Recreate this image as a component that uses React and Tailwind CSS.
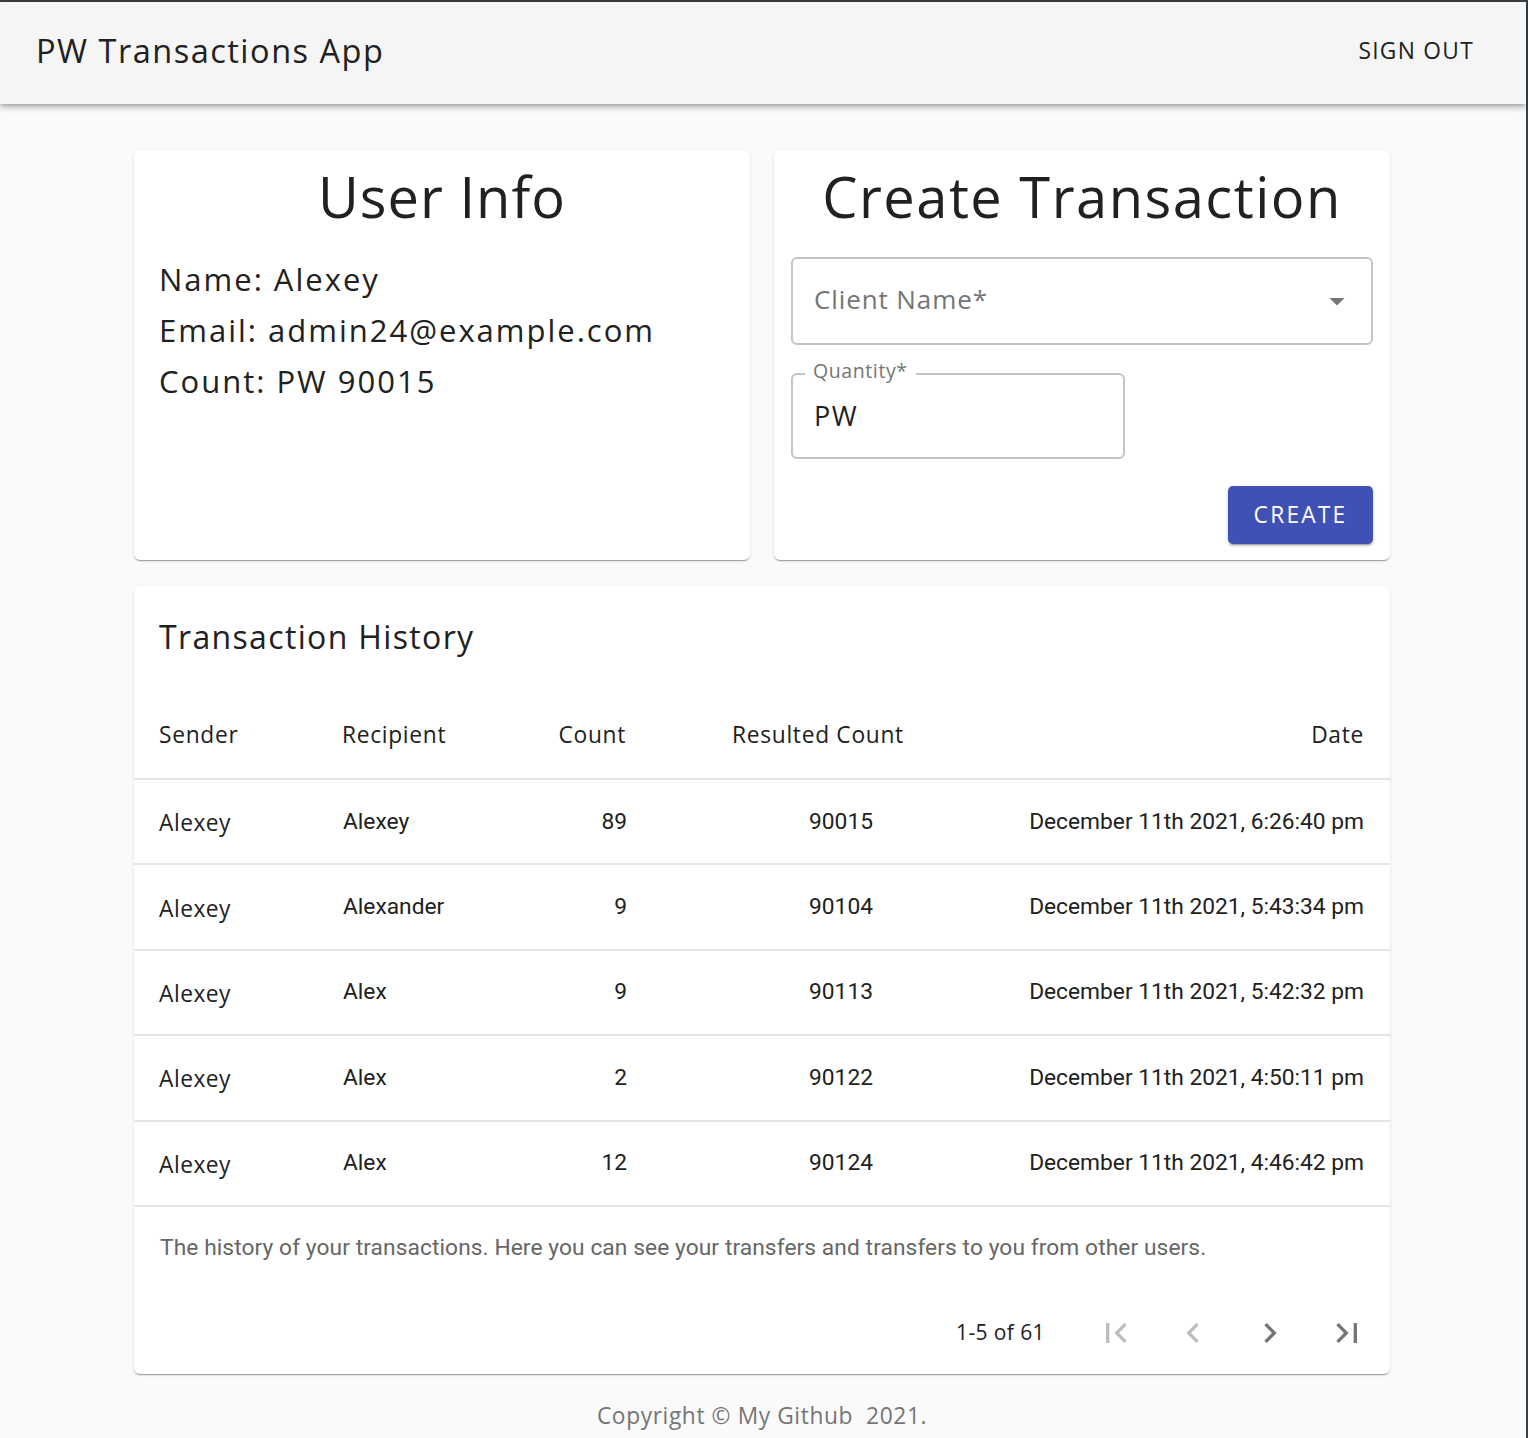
const MONT = "font-['Open_Sans',sans-serif]"
const ROBO = "font-['Roboto',sans-serif]"
const CARD = 'bg-white rounded-[6px] shadow-[0_2px_1px_-1px_rgba(0,0,0,0.2),0_1px_1px_0_rgba(0,0,0,0.14),0_1px_3px_0_rgba(0,0,0,0.12)]'

const ROWS = [
  { recipient: 'Alexey', count: '89', resulted: '90015', date: 'December 11th 2021, 6:26:40 pm' },
  { recipient: 'Alexander', count: '9', resulted: '90104', date: 'December 11th 2021, 5:43:34 pm' },
  { recipient: 'Alex', count: '9', resulted: '90113', date: 'December 11th 2021, 5:42:32 pm' },
  { recipient: 'Alex', count: '2', resulted: '90122', date: 'December 11th 2021, 4:50:11 pm' },
  { recipient: 'Alex', count: '12', resulted: '90124', date: 'December 11th 2021, 4:46:42 pm' },
]

const COLS = 'grid grid-cols-[183px_180px_104px_106px_216px_1fr] items-center'

function Icon({ d, className }) {
  return (
    <svg viewBox="0 0 24 24" className={className} fill="currentColor">
      <path d={d} />
    </svg>
  )
}

export default function App() {
  return (
    <div className={`min-h-[1438px] bg-[#fafafa] border-t-2 border-r-2 border-[#3c4043] ${MONT} text-[#212121]`}>
      {/* App bar */}
      <header className="h-[102px] bg-[#f5f5f5] flex items-center justify-between pl-[36px] pr-[52px] pb-[3px] shadow-[0_2px_4px_-1px_rgba(0,0,0,0.2),0_4px_5px_0_rgba(0,0,0,0.14),0_1px_10px_0_rgba(0,0,0,0.12)] relative z-10">
        <h1 className="text-[32.5px] tracking-[1.5px] text-[#212121]">PW Transactions App</h1>
        <button className="text-[22.75px] uppercase tracking-[1.3px] text-[#212121]">Sign out</button>
      </header>

      <main className="w-[1256px] ml-[134px] pt-[46px]">
        <div className="grid grid-cols-2 gap-[24px]">
          {/* User info */}
          <section className={`${CARD} h-[410px] pt-[13px] px-[25px]`}>
            <h2 className="text-center text-[56px] leading-[67px] tracking-[1px]">User Info</h2>
            <div className="mt-[24px] text-[31px] leading-[51px] tracking-[2px]">
              <p>Name: Alexey</p>
              <p>Email: admin24@example.com</p>
              <p>Count: PW 90015</p>
            </div>
          </section>

          {/* Create transaction */}
          <section className={`${CARD} h-[410px] pt-[13px] px-[17px]`}>
            <h2 className="text-center text-[56px] leading-[67px] tracking-[1.5px]">Create Transaction</h2>
            <div className="mt-[27px] h-[88px] border-2 border-[#c4c4c4] rounded-[6px] flex items-center justify-between pl-[21px] pr-[16px]">
              <span className="text-[26px] text-[#757575] tracking-[0.9px] pb-[3px]">Client Name*</span>
              <Icon d="M7 10l5 5 5-5z" className="w-[36px] h-[36px] text-[#757575]" />
            </div>
            <div className="relative mt-[28px] w-[334px] h-[86px] border-2 border-[#c4c4c4] rounded-[6px] flex items-center pl-[21px]">
              <span className="absolute -top-[19px] left-[12px] bg-white px-[8px] text-[19.5px] text-[#757575] tracking-[0.6px]">Quantity*</span>
              <span className="text-[27px] tracking-[1.5px]">PW</span>
            </div>
            <div className="flex justify-end mt-[27px]">
              <button className="w-[145px] h-[58px] rounded-[5px] bg-[#3f51b5] text-white text-[22.75px] uppercase tracking-[2.2px] shadow-[0_3px_1px_-2px_rgba(0,0,0,0.2),0_2px_2px_0_rgba(0,0,0,0.14),0_1px_5px_0_rgba(0,0,0,0.12)]">
                Create
              </button>
            </div>
          </section>
        </div>

        {/* Transaction history */}
        <section className={`${CARD} mt-[26px] h-[788px] pt-[31px]`}>
          <h2 className="px-[25px] text-[32px] leading-[40px] tracking-[1.35px]">Transaction History</h2>

          <div className={`${COLS} h-[123px] pt-[35px] px-[25px] border-b-2 border-[#e5e5e5] text-[22.75px] tracking-[0.7px]`}>
            <span>Sender</span>
            <span>Recipient</span>
            <span className="text-right">Count</span>
            <span />
            <span>Resulted Count</span>
            <span className="text-right pr-[1px]">Date</span>
          </div>

          {ROWS.map((r, i) => (
            <div key={i} className={`${COLS} h-[85.4px] px-[26px] border-b-2 border-[#e5e5e5]`}>
              <span className="text-[22.75px] pt-[3px] tracking-[0.5px] -ml-[1px]">Alexey</span>
              <span className={`${ROBO} text-[22.75px]`}>{r.recipient}</span>
              <span className={`${ROBO} text-[22.75px] text-right`}>{r.count}</span>
              <span />
              <span className={`${ROBO} text-[22.75px] text-center`}>{r.resulted}</span>
              <span className={`${ROBO} text-[22.75px] text-right`}>{r.date}</span>
            </div>
          ))}

          <p className={`${ROBO} h-[82px] flex items-center px-[26px] text-[22.75px] tracking-[0.08px] text-[#666666]`}>
            The history of your transactions. Here you can see your transfers and transfers to you from other users.
          </p>

          <div className="h-[84px] flex items-center justify-end pr-[23px] pt-[4px]">
            <span className="text-[21px] mr-[51px] tracking-[0.4px]">1-5 of 61</span>
            <div className="flex items-center gap-[37px]">
              <Icon d="M18.41 16.59L13.82 12l4.59-4.59L17 6l-6 6 6 6zM6 6h2v12H6z" className="w-[40px] h-[40px] text-[#bdbdbd]" />
              <Icon d="M15.41 16.59L10.83 12l4.58-4.59L14 6l-6 6 6 6 1.41-1.41z" className="w-[40px] h-[40px] text-[#bdbdbd]" />
              <Icon d="M8.59 16.59L13.17 12 8.59 7.41 10 6l6 6-6 6-1.41-1.41z" className="w-[40px] h-[40px] text-[#757575]" />
              <Icon d="M5.59 7.41L10.18 12l-4.59 4.59L7 18l6-6-6-6zM16 6h2v12h-2z" className="w-[40px] h-[40px] text-[#757575]" />
            </div>
          </div>
        </section>

        <footer className="h-[84px] flex items-center justify-center text-[22.75px] text-[#757575] tracking-[0.6px]">
          Copyright © My Github&nbsp; 2021.
        </footer>
      </main>
    </div>
  )
}
